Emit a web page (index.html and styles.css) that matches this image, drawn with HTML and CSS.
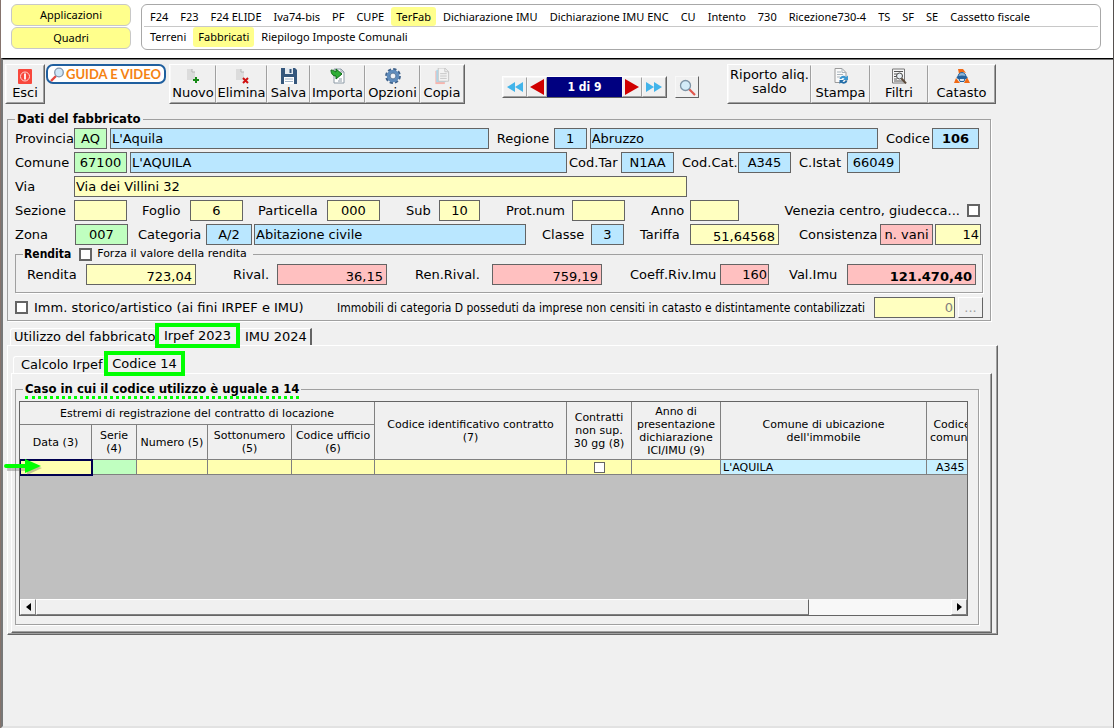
FILE: index.html
```html
<!DOCTYPE html>
<html lang="it">
<head>
<meta charset="utf-8">
<title>Terreni e fabbricati</title>
<link rel="stylesheet" href="styles.css">
</head>
<body>
<div class="window">
  <header class="top">
    <div class="modes">
      <button class="mode" type="button">Applicazioni</button>
      <button class="mode" type="button">Quadri</button>
    </div>
    <nav class="menu">
      <div class="menu-row">
        <a href="#">F24</a><a href="#">F23</a><a href="#">F24 ELIDE</a><a href="#">Iva74-bis</a><a href="#">PF</a><a href="#">CUPE</a><a href="#" class="on">TerFab</a><a href="#">Dichiarazione IMU</a><a href="#">Dichiarazione IMU ENC</a><a href="#">CU</a><a href="#">Intento</a><a href="#">730</a><a href="#">Ricezione730-4</a><a href="#">TS</a><a href="#">SF</a><a href="#">SE</a><a href="#">Cassetto fiscale</a>
      </div>
      <div class="menu-row">
        <a href="#">Terreni</a><a href="#" class="on">Fabbricati</a><a href="#">Riepilogo Imposte Comunali</a>
      </div>
    </nav>
  </header>

  <main class="page">
    <div class="toolbar">
      <div class="bar bar-exit">
        <button class="tool" type="button">
          <svg width="16" height="16" viewBox="0 0 16 16"><rect x="1" y="1" width="14" height="15" rx="1" fill="#f8473c"/><circle cx="8" cy="8.500" r="4.500" fill="none" stroke="#ffd5d0" stroke-width="1"/><path d="M8 5.500v6" stroke="#fff" stroke-width="1.800"/></svg>
          <span>Esci</span>
        </button>
      </div>
      <button class="guide" type="button">
        <svg width="15" height="15" viewBox="0 0 15 15"><path d="M1 14l5-5" stroke="#e5483f" stroke-width="2.400"/><circle cx="9" cy="5.500" r="4.300" fill="#cfe6f7" stroke="#8296ad" stroke-width="1.300"/></svg>
        <span>GUIDA E VIDEO</span>
      </button>
      <div class="bar bar-edit">
        <button class="tool" type="button">
          <svg width="16" height="16" viewBox="0 0 16 16"><path d="M2 1h5l3 3v8H2z" fill="#dcdcdc"/><path d="M7 1v3h3" fill="#f4f4f4" stroke="#b5b5b5"/><path d="M11 9v6M8 12h6" stroke="#168a16" stroke-width="2"/></svg>
          <span>Nuovo</span>
        </button>
        <button class="tool" type="button">
          <svg width="16" height="16" viewBox="0 0 16 16"><path d="M2 1h5l3 3v8H2z" fill="#dcdcdc"/><path d="M7 1v3h3" fill="#f4f4f4" stroke="#b5b5b5"/><path d="M9 10l5 5M14 10l-5 5" stroke="#d01010" stroke-width="2"/></svg>
          <span>Elimina</span>
        </button>
        <button class="tool" type="button">
          <svg width="16" height="16" viewBox="0 0 16 16"><path d="M0 0h14l2 2v14H0z" fill="#35577c"/><path d="M4 0h8v6H4z" fill="#e4eaf0"/><path d="M8.500 1h2v4h-2z" fill="#35577c"/><path d="M3 9h10v7H3z" fill="#fff"/><path d="M4 11h8M4 13.500h8" stroke="#9fb2c6"/></svg>
          <span>Salva</span>
        </button>
        <button class="tool" type="button">
          <svg width="16" height="16" viewBox="0 0 16 16"><path d="M4 1h7l3 3v11H4z" fill="#fff" stroke="#8c9aa6"/><path d="M11 1v3h3M9 11h3M8 13h4" fill="none" stroke="#8c9aa6"/><path d="M1 2c2 0 3 1 5 2V1l6 5-6 5V8C3 8 1 6 1 2z" fill="#2fae35" stroke="#0f6a18"/></svg>
          <span>Importa</span>
        </button>
        <button class="tool" type="button">
          <svg width="16" height="16" viewBox="0 0 16 16"><circle cx="8" cy="8" r="6.600" fill="none" stroke="#41638b" stroke-width="2.600" stroke-dasharray="3.200 1.980"/><circle cx="8" cy="8" r="4.600" fill="#f0f3f7" stroke="#5f8cbc" stroke-width="3.400"/><circle cx="8" cy="8" r="2.900" fill="#f0f3f7" stroke="#41638b" stroke-width=".8"/></svg>
          <span>Opzioni</span>
        </button>
        <button class="tool" type="button">
          <svg width="16" height="17" viewBox="0 0 16 18"><path d="M1 3h10v14H1z" fill="#f7b5ad"/><path d="M2 2h10v13H2z" fill="#a9dcf2"/><path d="M4 0h7l4 4v10H4z" fill="#f3f3f3" stroke="#c4c4c4"/><path d="M11 0v4h4M6 6h7M6 8.500h7M6 11h7" fill="none" stroke="#c4c4c4"/></svg>
          <span>Copia</span>
        </button>
      </div>

      <div class="pager">
        <button class="step step-wide" type="button" aria-label="Primo"><svg width="16" height="10" viewBox="0 0 16 10"><path d="M8 0v10L0 5zM16 0v10L8 5z" fill="#42b4ea"/></svg></button>
        <button class="step" type="button" aria-label="Precedente"><svg width="14" height="16" viewBox="0 0 14 16"><path d="M14 0v16L0 8z" fill="#d00000"/></svg></button>
        <output class="count">1 di 9</output>
        <button class="step" type="button" aria-label="Successivo"><svg width="14" height="16" viewBox="0 0 14 16"><path d="M0 0v16l14-8z" fill="#d00000"/></svg></button>
        <button class="step step-wide" type="button" aria-label="Ultimo"><svg width="16" height="10" viewBox="0 0 16 10"><path d="M0 0v10l8-5zM8 0v10l8-5z" fill="#42b4ea"/></svg></button>
      </div>
      <button class="find" type="button" aria-label="Cerca"><svg width="17" height="17" viewBox="0 0 17 17"><path d="M10 10l6 6" stroke="#e0564c" stroke-width="2.200"/><circle cx="6.500" cy="6.500" r="5" fill="#d3ebf8" stroke="#7d93a5" stroke-width="1.300"/></svg></button>

      <div class="bar bar-print">
        <button class="tool tool-text" type="button"><span>Riporto aliq.<br>saldo</span></button>
        <button class="tool" type="button">
          <svg width="16" height="16" viewBox="0 0 16 16"><path d="M2 .5h7l4 4v10H2z" fill="#fafafa" stroke="#9a9a9a"/><path d="M9 .5v4h4M4 4h4M4 6.500h6M4 9h3" fill="none" stroke="#a9b4bc"/><path d="M6.500 11c1-4 5-4 6.500-2l2-1.500V12h-5l1.500-1.500C10 9.500 9 10 8.500 11z" fill="#3c97d0"/><path d="M14.500 12.500c-1 3.500-5 4-6.500 2L6.500 16v-4H11l-1.500 1.500c1 .7 2.500.5 3-1z" fill="#226da8"/></svg>
          <span>Stampa</span>
        </button>
        <button class="tool" type="button">
          <svg width="16" height="16" viewBox="0 0 16 16"><path d="M1.500 1h12v14h-12z" fill="#f7f7f7" stroke="#777"/><path d="M3 3.500h9M3 6h3M3 8.500h2M3 11h3M3 13h9" stroke="#555"/><circle cx="8.500" cy="8" r="3" fill="#e9eff3" stroke="#444"/><path d="M10.500 10.500l4.500 5" stroke="#5c4b3b" stroke-width="2"/></svg>
          <span>Filtri</span>
        </button>
        <button class="tool" type="button">
          <svg width="16" height="16" viewBox="0 0 16 16"><path d="M4 1h5l3 4-4-1-3 2zM0 15l2-5 4 5zM16 15l-3-6-3 6z" fill="#f06a16"/><path d="M4 9c0-6 8-6 8 0z" fill="#8db6d8" stroke="#24629d"/><ellipse cx="8" cy="9.500" rx="5.500" ry="2" fill="#24629d"/><path d="M5 10.500h6l-1 3H6z" fill="#d7e6f2" stroke="#24629d"/></svg>
          <span>Catasto</span>
        </button>
      </div>
    </div>

    <fieldset class="group building">
      <legend class="title">Dati del fabbricato</legend>
      <div class="row row-prov">
        <label for="prov">Provincia</label>
        <input class="field green mid" id="prov" value="AQ">
        <input class="field blue" aria-label="Nome provincia" value="L'Aquila">
        <label class="lead" for="reg">Regione</label>
        <input class="field blue mid" id="reg" value="1">
        <input class="field blue" aria-label="Nome regione" value="Abruzzo">
        <label class="lead" for="cod">Codice</label>
        <input class="field blue mid strong" id="cod" value="106">
      </div>
      <div class="row row-comune">
        <label for="cap">Comune</label>
        <input class="field green mid" id="cap" value="67100">
        <input class="field blue" aria-label="Nome comune" value="L'AQUILA">
        <label class="near" for="tar">Cod.Tar</label>
        <input class="field blue mid" id="tar" value="N1AA">
        <label class="lead" for="cat">Cod.Cat.</label>
        <input class="field blue mid" id="cat" value="A345">
        <label class="lead" for="istat">C.Istat</label>
        <input class="field blue mid" id="istat" value="66049">
      </div>
      <div class="row row-via">
        <label for="via">Via</label>
        <input class="field yellow" id="via" value="Via dei Villini 32">
      </div>
      <div class="row row-sez">
        <label for="sez">Sezione</label>
        <input class="field yellow" id="sez" value="">
        <label for="fog">Foglio</label>
        <input class="field yellow mid" id="fog" value="6">
        <label for="par">Particella</label>
        <input class="field yellow mid" id="par" value="000">
        <label for="sub">Sub</label>
        <input class="field yellow mid" id="sub" value="10">
        <label for="prot">Prot.num</label>
        <input class="field yellow" id="prot" value="">
        <label for="anno">Anno</label>
        <input class="field yellow" id="anno" value="">
        <label class="end" for="ven">Venezia centro, giudecca...</label>
        <input class="check" type="checkbox" id="ven">
      </div>
      <div class="row row-zona">
        <label for="zona">Zona</label>
        <input class="field green mid" id="zona" value="007">
        <label for="categ">Categoria</label>
        <input class="field blue mid" id="categ" value="A/2">
        <input class="field blue" aria-label="Descrizione categoria" value="Abitazione civile">
        <label for="classe">Classe</label>
        <input class="field blue mid" id="classe" value="3">
        <label for="tariffa">Tariffa</label>
        <input class="field yellow num" id="tariffa" value="51,64568">
        <label for="cons">Consistenza</label>
        <input class="field red mid" id="cons" value="n. vani">
        <input class="field yellow end" aria-label="Numero vani" value="14">
      </div>
      <fieldset class="group income">
        <legend class="income-legend"><b>Rendita</b><input class="check" type="checkbox" id="forza"><label for="forza">Forza il valore della rendita</label></legend>
        <div class="row row-income">
          <label for="rend">Rendita</label>
          <input class="field yellow num" id="rend" value="723,04">
          <label for="rival">Rival.</label>
          <input class="field red num" id="rival" value="36,15">
          <label for="renriv">Ren.Rival.</label>
          <input class="field red num" id="renriv" value="759,19">
          <label for="coeff">Coeff.Riv.Imu</label>
          <input class="field red end" id="coeff" value="160">
          <label for="val">Val.Imu</label>
          <input class="field red num strong" id="val" value="121.470,40">
        </div>
      </fieldset>
      <div class="row row-last">
        <input class="check" type="checkbox" id="imm">
        <label for="imm">Imm. storico/artistico (ai fini IRPEF e IMU)</label>
        <label class="narrow" for="catd">Immobili di categoria D posseduti da imprese non censiti in catasto e distintamente contabilizzati</label>
        <input class="field yellow end off" id="catd" value="0">
        <button class="more" type="button" aria-label="Dettagli">...</button>
      </div>
    </fieldset>

    <div class="tabs tabs-main">
      <button class="tab first" type="button">Utilizzo del fabbricato</button>
      <button class="tab active" type="button">Irpef 2023</button>
      <button class="tab last" type="button">IMU 2024</button>
    </div>
    <section class="panel panel-main">
      <div class="tabs tabs-sub">
        <button class="tab first" type="button">Calcolo Irpef</button>
        <button class="tab active" type="button">Codice 14</button>
      </div>
      <section class="panel">
        <fieldset class="group contract">
          <legend class="title"><span class="marked">Caso in cui il codice utilizzo è uguale a 14</span></legend>
          <div class="sheet-wrap">
            <div class="sheet">
              <table class="grid">
                <colgroup><col class="c-data"><col class="c-serie"><col class="c-num"><col class="c-sotto"><col class="c-uff"><col class="c-ident"><col class="c-gg"><col class="c-anno"><col class="c-com"><col class="c-cod"></colgroup>
                <thead>
                  <tr class="h-top"><th colspan="5">Estremi di registrazione del contratto di locazione</th><th rowspan="2">Codice identificativo contratto<br>(7)</th><th rowspan="2">Contratti non sup. 30 gg (8)</th><th rowspan="2">Anno di presentazione dichiarazione ICI/IMU (9)</th><th rowspan="2">Comune di ubicazione<br>dell'immobile</th><th rowspan="2" class="cut">Codice comune</th></tr>
                  <tr class="h-sub"><th>Data (3)</th><th>Serie (4)</th><th>Numero (5)</th><th>Sottonumero (5)</th><th>Codice ufficio (6)</th></tr>
                </thead>
                <tbody>
                  <tr><td class="current"></td><td class="serie"></td><td></td><td></td><td></td><td></td><td class="tick"><input class="check thin" type="checkbox" aria-label="Contratti non superiori a 30 giorni"></td><td></td><td class="info">L'AQUILA</td><td class="info code">A345</td></tr>
                </tbody>
              </table>
              <div class="scroll">
                <button class="scroll-btn" type="button" aria-label="Sinistra"><svg width="5" height="8" viewBox="0 0 5 8"><path d="M5 0v8L0 4z"/></svg></button>
                <div class="thumb"></div>
                <div class="track"></div>
                <button class="scroll-btn" type="button" aria-label="Destra"><svg width="5" height="8" viewBox="0 0 5 8"><path d="M0 0v8l5-4z"/></svg></button>
              </div>
            </div>
            <svg class="pointer" width="40" height="18" viewBox="0 0 40 18"><path d="M3 9h20V5l15 5-15 7v-4H3z" fill="#555" opacity=".35"/><path d="M2 6h19V1L37 8 21 15V10H2a2 2 0 0 1 0-4z" fill="#0f0"/></svg>
          </div>
        </fieldset>
      </section>
    </section>
  </main>
</div>
</body>
</html>
```
FILE: styles.css
```css
* { box-sizing: border-box; }

body {
  margin: 0;
  background: #fff;
  color: #000;
  font: 13px/16px "DejaVu Sans", sans-serif;
}

button, input, output { font: inherit; color: inherit; }
button { padding: 0; cursor: pointer; }

.window {
  display: flex;
  flex-direction: column;
  min-height: 100vh;
  border-left: 1px solid #85736c;
  border-right: 1px solid #55504e;
}

/* Top menu */
.top {
  display: flex;
  gap: 10px;
  padding: 4px 12px 8px 10px;
  font: 11px/20px "Noto Sans", sans-serif;
}
.modes { display: flex; flex-direction: column; gap: 1px; width: 120px; }
.mode {
  height: 22px;
  border: 1px solid #c8c8c8;
  border-radius: 6px;
  background: #ffff8c;
}
.menu {
  flex: 1;
  min-width: 0;
  padding: 2px;
  border: 1px solid #a8a8a8;
  border-radius: 6px;
}
.menu-row { display: flex; gap: 2px; height: 20px; padding-left: 1px; white-space: nowrap; }
.menu-row:first-child { border-bottom: 1px solid #c8c8c8; }
.menu-row a { padding: 0 5px; border-radius: 3px; color: #000; text-decoration: none; }
.menu-row .on { background: #ffff8c; }

/* Page body */
.page {
  flex: 1;
  border-top: 1px solid #000;
  border-left: 2px solid #777;
  border-bottom: 2px solid #e2e2e2;
  box-shadow: inset 0 1px #777;
  background: #f0f0f0;
}

/* Toolbar */
.toolbar {
  display: flex;
  align-items: flex-start;
  padding: 5px 117px 7px 2px;
}
.bar {
  display: grid;
  grid-template-rows: 38px;
  height: 40px;
  border: 1px solid;
  border-color: #fff #646464 #646464 #fff;
}
.bar-exit { width: 40px; }
.bar-edit { grid-template-columns: 46px 51px 43px 55px 55px 44px; margin-left: 3px; }
.bar-print { grid-template-columns: 83px 59px 58px 67px; margin-left: auto; }
.tool {
  display: flex;
  flex-direction: column;
  align-items: center;
  justify-content: space-between;
  padding: 2px 0 1px;
  border: 1px solid;
  border-color: #f0f0f0 #a0a0a0 #a0a0a0 #f8f8f8;
  background: #f0f0f0;
  white-space: nowrap;
}
.tool-text { line-height: 14px; }
.guide {
  display: flex;
  align-items: center;
  gap: 1px;
  width: 120px;
  height: 20px;
  margin-left: 1px;
  padding: 0 2px;
  border: 2px solid #1f5f9f;
  border-radius: 7px;
  background: #fff;
  color: #f58212;
  font: bold 13px/16px Lato, sans-serif;
  white-space: nowrap;
}
.pager { display: flex; margin: 12px 8px 0 37px; border: 1px solid; border-color: #fff #646464 #646464 #fff; }
.step, .find {
  display: flex;
  align-items: center;
  justify-content: center;
  width: 20px;
  height: 20px;
  border: 1px solid;
  border-color: #f8f8f8 #a0a0a0 #a0a0a0 #f8f8f8;
  background: #f0f0f0;
}
.step-wide { width: 24px; }
.count {
  width: 75px;
  background: #000080;
  color: #fff;
  font: bold 12px/20px "DejaVu Sans Condensed", "DejaVu Sans", sans-serif;
  text-align: center;
}
.find { width: 24px; height: 22px; margin-top: 12px; border-right-color: #646464; border-bottom-color: #646464; }

/* Group boxes */
.group {
  min-width: 0;
  margin: 0;
  border: 1px solid #a0a0a0;
  box-shadow: 1px 1px #fff;
}
.title { height: 16px; padding: 0 2px; font-weight: bold; font-family: "DejaVu Sans Condensed", "DejaVu Sans", sans-serif; }
.building { margin: 0 122px 0 4px; padding: 1px 7px 2px; }

/* Form rows */
.row { display: grid; align-items: center; height: 21px; margin-bottom: 3px; white-space: nowrap; }
.lead { padding-left: 8px; }
.near { padding-left: 2px; }
.row-prov { grid-template-columns: 59px 33px minmax(0, 38fr) 65px 33px minmax(0, 29fr) 54px 47px; padding-right: 4px; }
.row-prov .field + .field, .row-comune .field + .field { margin-left: 3px; }
.row-comune { grid-template-columns: 59px 53px 1fr 54px 53px 64px 53px 56px 53px; padding-right: 83px; }
.row-via { grid-template-columns: 59px 1fr; padding-right: 296px; }
.row-sez { grid-template-columns: 59px 53px 63px 53px 84px 53px 59px 41px 92px 53px 65px 49px 1fr 13px; padding-right: 3px; }
.row-sez label:nth-of-type(n+2) { padding-left: 15px; }
.row-sez label:nth-of-type(n+4):not(.end) { padding-left: 26px; }
.row-sez .end { padding-right: 7px; }
.row-zona { grid-template-columns: 60px 53px 78px 46px 1fr 65px 33px 66px 89px 101px 53px 48px; padding-right: 2px; }
.row-zona label:nth-of-type(n+2) { padding-left: 16px; }
.row-zona label:nth-of-type(2) { padding-left: 10px; }
.row-zona label:last-of-type { padding-left: 20px; }
.row-zona .field + .field { margin-left: 2px; }
.row-income { grid-template-columns: 59px 110px 1fr 110px 105px 110px 118px 49px 78px 129px; margin: 0; }
.row-income label:nth-of-type(n+2) { padding-left: 28px; }
.row-income label:nth-of-type(2) { padding-left: 37px; }
.row-income label:last-of-type { padding-left: 20px; }
.row-last { grid-template-columns: 13px auto 1fr 81px 25px; column-gap: 3px; margin-bottom: 0; }
.row-last label { padding-left: 3px; }
.row-last .narrow { padding-right: 6px; font: 12px/16px "DejaVu Sans Condensed", "DejaVu Sans", sans-serif; text-align: right; }

.field {
  min-width: 0;
  height: 21px;
  padding: 0 1px;
  border: 1px solid #646464;
  border-radius: 0;
}
.green { background: #c0ffc0; }
.blue { background: #bae7ff; }
.yellow { background: #ffffc0; }
.red { background: #ffc0c0; }
.mid { text-align: center; }
.end { text-align: right; }
.num { padding: 3px 3px 0; text-align: right; }
.strong { font-weight: bold; }
.off { color: #808080; }

.check {
  appearance: none;
  width: 13px;
  height: 13px;
  margin: 0;
  border: 2px solid #646464;
  background: #fff;
}
.check:checked { background: #646464; }
.thin { width: 11px; height: 11px; border-width: 1px; vertical-align: middle; }
.more {
  height: 21px;
  border: 1px solid;
  border-color: #fff #646464 #646464 #fff;
  background: #f0f0f0;
  color: #a0a0a0;
}

.income { margin: -2px 0 4px; padding: 2px 6px 7px 11px; }
.income-legend {
  display: flex;
  align-items: center;
  height: 16px;
  margin-left: -4px;
  padding: 0 6px 0 1px;
  font-size: 12px;
}
.income-legend b { font-family: "DejaVu Sans Condensed", "DejaVu Sans", sans-serif; }
.income-legend .check { margin: 0 5px 0 8px; }
.income-legend label { font-size: 11px; }

/* Tabs */
.tabs { display: flex; align-items: flex-end; }
.tab {
  height: 17px;
  border: 0 solid #fff;
  border-top-width: 1px;
  background: #f0f0f0;
  text-align: left;
  white-space: nowrap;
}
.tab.first { border-left-width: 1px; border-top-left-radius: 3px; }
.tab.last { border-right: 2px solid #646464; }
.tab.active {
  position: relative;
  height: 25px;
  margin-bottom: -3px;
  border: 4px solid #0f0;
  text-align: center;
}
.tabs-main { height: 22px; margin: 2px 0 0 7px; }
.tabs-main .first { width: 145px; padding-left: 3px; }
.tabs-main .active { width: 85px; }
.tabs-main .last { width: 72px; padding-left: 5px; }
.tabs-sub { height: 21px; margin-left: 2px; }
.tabs-sub .first { width: 91px; padding-left: 7px; }
.tabs-sub .active { width: 81px; }

.panel {
  padding: 7px 12px 7px 3px;
  border: 1px solid;
  border-color: #fff #646464 #646464 #fff;
  box-shadow: inset -1px -1px #a0a0a0;
}
.panel-main { margin: 0 115px 0 4px; padding: 6px 5px 1px 3px; }

/* Contract sheet */
.contract { padding: 4px 10px 8px 3px; }
.contract .title { padding: 0 2px; margin-left: 4px; }
.marked { display: inline-block; height: 18px; border-bottom: 3px dotted #0f0; }
.sheet-wrap { position: relative; }
.sheet {
  display: flex;
  flex-direction: column;
  justify-content: space-between;
  min-height: 215px;
  overflow: hidden;
  border: 1px solid #646464;
  background: #c0c0c0;
}
.grid {
  width: 960px;
  border-collapse: collapse;
  table-layout: fixed;
  margin: -1px 0 0 -1px;
  font-size: 11px;
  line-height: 13px;
}
.grid th, .grid td { padding: 0 2px; border: 1px solid #808080; }
.grid th { background: #f0f0f0; font-weight: normal; }
.grid .cut { padding: 0 2px 0 0; }
.grid td { height: 15px; background: #ffffb0; }
.grid .current { outline: 2px solid #000050; outline-offset: -1px; }
.grid .serie { background: #c0ffc0; }
.grid .info { background: #c8f0ff; }
.grid .tick { text-align: center; line-height: 11px; }
.grid .code { padding-left: 9px; }
.h-top { height: 23px; }
.h-sub { height: 35px; }
.c-data { width: 72px; }
.c-serie { width: 45px; }
.c-num { width: 71px; }
.c-sotto { width: 84px; }
.c-uff { width: 83px; }
.c-ident { width: 192px; }
.c-gg { width: 65px; }
.c-anno { width: 89px; }
.c-com { width: 206px; }
.c-cod { width: 53px; }

.scroll { display: flex; height: 16px; }
.scroll-btn, .thumb {
  border: 1px solid;
  border-color: #fff #808080 #808080 #fff;
  background: #f0f0f0;
}
.scroll-btn { display: flex; align-items: center; justify-content: center; width: 16px; }
.thumb { flex: 773; border-right-color: #646464; }
.track { flex: 142; background: #f8f8f8; }
.pointer { position: absolute; left: -15px; top: 57px; }
```
